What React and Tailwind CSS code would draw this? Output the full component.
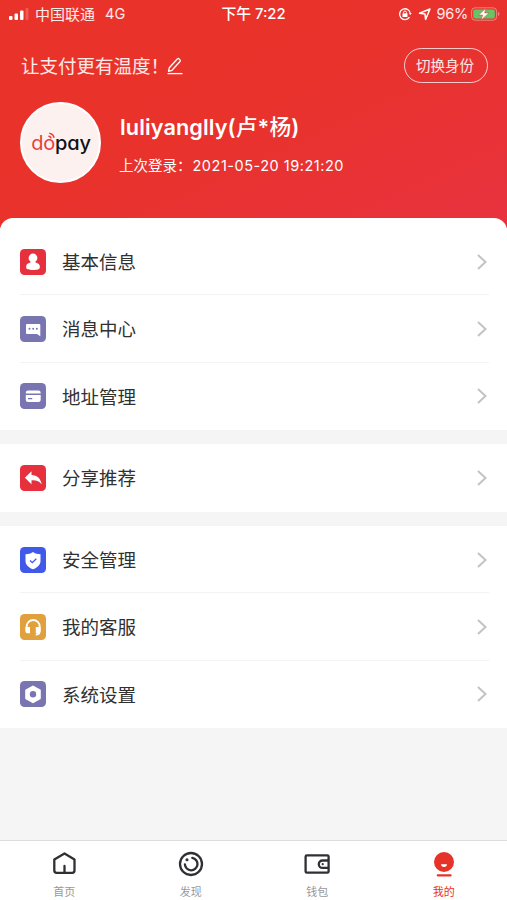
import React from "react";

const Person = () => (
  <g fill="#fff">
    <circle cx="13" cy="9" r="4.4" />
    <path d="M10.800 12h4.400l.4 1.600c2.800.7 4.300 2 4.300 4.300 0 2.300-2 3-6.900 3s-6.900-.7-6.900-3c0-2.300 1.500-3.600 4.300-4.300z" />
  </g>
);
const Message = () => (
  <>
    <path d="M7 8h12.300q1 0 1 1v11.300l-3.300-2.300H7q-1 0-1-1V9q0-1 1-1z" fill="#fff" />
    <g fill="#7975b0">
      <circle cx="9.500" cy="12.800" r="1" />
      <circle cx="13.200" cy="12.800" r="1" />
      <circle cx="16.900" cy="12.800" r="1" />
    </g>
  </>
);
const Card = () => (
  <g fill="#fff">
    <path d="M8 7.500h10.500q2.200 0 2.200 2.200v.8H5.800v-.8q0-2.200 2.200-2.200z" />
    <path d="M5.800 12h14.900v5q0 2-2.200 2H8q-2.200 0-2.200-2z" />
    <path d="M8 15.700h4.300" stroke="#7975b0" strokeWidth="1.200" />
  </g>
);
const Share = () => (
  <path d="M4.900 12.700 11.500 6.200V10c5.800.2 9 3.400 10.300 9.500-2.500-3.500-5.600-4.600-10.300-4.300v4z" fill="#fff" />
);
const Shield = () => (
  <>
    <path d="M13 5c2 1.600 4.500 2.200 7.500 2.200V14c0 4-3.500 6.700-7.500 8.300C9 20.700 5.500 18 5.500 14V7.200C8.500 7.200 11 6.600 13 5z" fill="#fff" />
    <path d="m10 13.500 2.300 2.200 4-4" fill="none" stroke="#4059e8" strokeWidth="1.300" />
  </>
);
const Headset = () => (
  <>
    <path d="M6.700 14v-1.500a6.500 6.500 0 0 1 13 0V17c0 2.500-1 3.600-4 3.600" fill="none" stroke="#fff" strokeWidth="1.800" />
    <path d="M5.300 13h4.700v6.300H7.500q-2.200 0-2.200-2.200zM15.800 13h4.800v4.100q0 2.200-2.200 2.200h-2.600z" fill="#fff" />
  </>
);
const Hexagon = () => (
  <>
    <path d="M13 5.500 19.800 9.300v8L13 21.200l-6.800-3.900v-8z" fill="#fff" stroke="#fff" strokeWidth="2" strokeLinejoin="round" />
    <circle cx="13" cy="13.300" r="3.200" fill="#7975b0" />
  </>
);

function Row({ label, color, icon, last }) {
  return (
    <div className="relative flex flex-1 items-center px-5">
      <svg viewBox="0 0 26 26" className={`h-[26px] w-[26px] shrink-0 rounded-[4.500px] ${color}`}>
        {icon}
      </svg>
      <span className="ml-4 pt-px text-[18.500px] leading-none text-[#303030]">{label}</span>
      <svg viewBox="0 0 12 18" className="-mr-px ml-auto h-[18px] w-3" fill="none" stroke="#c3c3c3" strokeWidth="2">
        <path d="m2 2 7.500 7L2 16" />
      </svg>
      {!last && <div className="absolute bottom-0 left-5 right-[18px] h-px bg-[#f3f3f3]" />}
    </div>
  );
}

function Tab({ label, active, children }) {
  return (
    <div className="flex flex-1 flex-col items-center pt-2">
      <svg viewBox="0 0 30 30" className="h-[30px] w-[30px]" fill="none" stroke="#303034" strokeWidth="2.300" strokeLinejoin="round" strokeLinecap="round">
        {children}
      </svg>
      <span className={`mt-2 text-[11px] leading-none ${active ? "text-[#e6332a]" : "text-[#999]"}`}>{label}</span>
    </div>
  );
}

export default function App() {
  return (
    <div className="flex h-[900px] w-[507px] flex-col overflow-hidden bg-[#f5f5f5] font-[Inter,'Noto_Sans_CJK_SC',sans-serif]">
      <header className="flex h-[228px] shrink-0 flex-col bg-[linear-gradient(155deg,#e9322a_0%,#e9322b_45%,#e8323f_100%)] text-white">
        <div className="grid h-7 grid-cols-3 items-center text-[14.500px] leading-none text-white/90">
          <div className="flex items-center pl-[9px]">
            <svg viewBox="0 0 20 12" className="h-3 w-5" fill="#fff">
              <rect x="0" y="8" width="3.500" height="4" rx="1" />
              <rect x="5.500" y="5.500" width="3.500" height="6.500" rx="1" />
              <rect x="11" y="2.500" width="3.500" height="9.500" rx="1" />
              <rect x="16.500" y="0" width="3" height="12" rx="1" opacity=".2" />
            </svg>
            <span className="ml-[6px] text-[15px]">中国联通</span>
            <span className="ml-[10px]">4G</span>
          </div>
          <div className="text-center text-[14.800px] font-medium text-white">下午 7:22</div>
          <div className="flex items-center justify-end pr-[7px]">
            <svg viewBox="0 0 14 14" className="h-[14px] w-[14px]" fill="none" stroke="#fff" strokeWidth="1.300">
              <path d="M11.500 10.200A5.400 5.400 0 1 1 12.400 7" />
              <path d="m10.800 6.200 1.600 1.700 1.300-1.700z" fill="#fff" stroke="none" />
              <rect x="4.500" y="6.200" width="5" height="3.700" rx=".5" fill="#fff" stroke="none" />
              <path d="M5.600 6.400V5.300q0-1.300 1.400-1.300t1.400 1.300v1.100" strokeWidth="1" />
            </svg>
            <svg viewBox="0 0 14 14" className="ml-[6px] h-[14px] w-[14px]" fill="none" stroke="#fff" strokeWidth="1.500" strokeLinejoin="round">
              <path d="M1.500 6.300 12 2 7.600 12.400 7 7z" />
            </svg>
            <span className="ml-[4px] tracking-[-0.200px]">96%</span>
            <svg viewBox="0 0 29 14" className="ml-[3px] h-[14px] w-[29px]">
              <rect x=".6" y=".8" width="25" height="12.400" rx="3.500" fill="none" stroke="#fff" strokeOpacity=".4" />
              <rect x="2.300" y="2.500" width="21.500" height="9" rx="1.800" fill="#65c466" />
              <path d="M27 5v4q1.500-.5 1.500-2T27 5z" fill="#fff" opacity=".4" />
              <path d="m14.800 1.200-7.300 6.900h4.200l-1.700 5.100 8-7.300h-4.400z" fill="#fff" stroke="#e9322b" strokeWidth=".5" />
            </svg>
          </div>
        </div>
        <div className="mt-5 flex h-[35px] items-center pl-[21px] pr-[19px] text-[18.500px] leading-none text-white/90">
          <span className="w-[145px] whitespace-nowrap pt-[2px]">让支付更有温度！</span>
          <svg viewBox="0 0 18 18" className="mt-px h-[18px] w-[18px]" fill="none" stroke="#fff" strokeWidth="1.300" strokeLinejoin="round">
            <path d="M2.500 14.300 3.300 10.800 11.500 1.800Q12.300 1.200 13 1.900l1 1q.7.8 0 1.600L6 13.300z" />
            <path d="M1.500 16.600h15" />
          </svg>
          <div className="ml-auto flex h-[35px] w-[84px] items-center justify-center rounded-full border border-white/75 pr-[2px] pt-px text-[14.500px]">切换身份</div>
        </div>
        <div className="mt-[19px] flex items-center pl-5">
          <div className="flex h-[81px] w-[81px] items-center justify-center rounded-full border-2 border-white bg-[#fdf1f0]">
            <div className="relative flex pl-px text-[20px] leading-none [font-feature-settings:'cv11']">
              <span className="tracking-[-0.200px] text-[#e5413b]">do</span>
              <span className="font-medium tracking-[-0.200px] text-[#111]">pay</span>
              <svg viewBox="0 0 8 8" className="absolute left-[18px] top-[-1px] h-[7px] w-[7px]" fill="none" stroke="#e5413b" strokeWidth="1.600" strokeLinecap="round">
                <path d="M2 1.500q4 .8 4.800 4.500M1 4.800q2 .4 2.500 2" />
              </svg>
            </div>
          </div>
          <div className="ml-[19px] pt-[5px]">
            <div className="whitespace-nowrap text-[21.700px] font-semibold leading-[26px] tracking-[0.100px]">luliyanglly(<span className="font-medium">卢</span>*<span className="font-medium">杨</span>)</div>
            <div className="-ml-px mt-[16px] whitespace-nowrap text-[14.500px] leading-[20px]">上次登录：<span className="ml-px tracking-[0.520px]">2021-05-20 19:21:20</span></div>
          </div>
        </div>
      </header>
      <section className="z-10 -mt-[10px] flex h-[212px] shrink-0 flex-col rounded-t-[13px] bg-white pt-[10px]">
        <Row label="基本信息" color="bg-[#e6303d]" icon={<Person />} />
        <Row label="消息中心" color="bg-[#7975b0]" icon={<Message />} />
        <Row label="地址管理" color="bg-[#7975b0]" icon={<Card />} last />
      </section>
      <section className="mt-[14px] flex h-[68px] shrink-0 bg-white">
        <Row label="分享推荐" color="bg-[#e6303d]" icon={<Share />} last />
      </section>
      <section className="mt-[14px] flex h-[202px] shrink-0 flex-col bg-white">
        <Row label="安全管理" color="bg-[#4059e8]" icon={<Shield />} />
        <Row label="我的客服" color="bg-[#e0a03e]" icon={<Headset />} />
        <Row label="系统设置" color="bg-[#7975b0]" icon={<Hexagon />} last />
      </section>
      <nav className="mt-auto flex h-[60px] border-t border-[#dcdcdc] bg-white pl-px">
        <Tab label="首页">
          <path d="M5.300 10.500 15.500 4.400l10 6.100v11q0 2.300-2.300 2.300H7.600q-2.300 0-2.300-2.300zM15.500 17v6" />
        </Tab>
        <Tab label="发现">
          <circle cx="15" cy="15" r="11" />
          <path d="M16.300 8.800A6.300 6.300 0 1 1 8.900 15.300" />
          <circle cx="11" cy="10.800" r=".8" fill="#303034" strokeWidth="1.500" />
        </Tab>
        <Tab label="钱包">
          <rect x="3.600" y="6.400" width="23" height="17.300" rx="1.300" />
          <path d="M26 11.500h-5.500a3.700 3.700 0 0 0 0 7.400H26" />
          <circle cx="20.700" cy="15.200" r=".5" strokeWidth="1.200" />
        </Tab>
        <Tab label="我的" active>
          <circle cx="15" cy="13" r="10" fill="#e6332a" stroke="none" />
          <path d="M12 15.300h6q-.3 2.700-3 2.700t-3-2.700z" fill="#fff" stroke="none" />
          <path d="M8.800 26.300h12.800" stroke="#e6332a" />
        </Tab>
      </nav>
    </div>
  );
}
